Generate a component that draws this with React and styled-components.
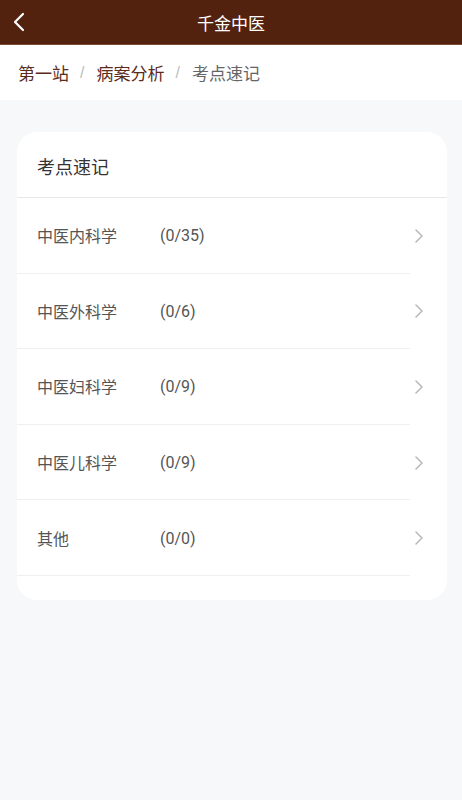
import React from "react";
import styled, { createGlobalStyle } from "styled-components";

const GlobalStyle = createGlobalStyle`
  html, body {
    margin: 0;
    padding: 0;
    background: #f7f8fa;
    font-family: Roboto, "Noto Sans CJK SC", "Noto Sans", sans-serif;
  }
`;

const Page = styled.div`
  min-height: 800px;
  background: #f7f8fa;
`;

const NavBar = styled.div`
  height: 44px;
  background: #52220f;
  border-bottom: 1px solid #7a4a33;
  display: flex;
  align-items: center;
`;

const BackButton = styled.div`
  width: 44px;
  height: 44px;
  display: flex;
  align-items: center;
  padding-left: 12px;
  box-sizing: border-box;
`;

const NavTitle = styled.div`
  flex: 1;
  text-align: center;
  margin-right: 44px;
  color: #fff;
  font-size: 17px;
  font-family: "Noto Sans CJK SC", sans-serif;
`;

const Crumbs = styled.div`
  height: 55px;
  background: #fff;
  display: flex;
  align-items: center;
  padding: 0 18px;
  font-size: 17px;
  font-family: "Noto Sans CJK SC", sans-serif;
`;

const Crumb = styled.span`
  color: ${(p) => (p.$current ? "#666" : "#5c2b1c")};
`;

const Slash = styled.span`
  color: #bdbdbd;
  margin: 0 12px 0 11px;
  font-size: 16px;
  font-family: "Liberation Sans", sans-serif;
`;

const Body = styled.div`
  padding: 32px 15px 0 17px;
`;

const Card = styled.div`
  background: #fff;
  border-radius: 20px;
  padding-bottom: 24px;
  overflow: hidden;
`;

const CardTitle = styled.div`
  height: 66px;
  display: flex;
  align-items: center;
  padding: 3px 0 0 20px;
  box-sizing: border-box;
  border-bottom: 1px solid #e8e8e8;
  color: #333;
  font-size: 18px;
  font-family: "Noto Sans CJK SC", sans-serif;
`;

const Row = styled.div`
  display: flex;
  align-items: center;
`;

const RowLine = styled.div`
  width: 393px;
  height: 75.6px;
  box-sizing: border-box;
  border-bottom: 1px solid #efefef;
  display: flex;
  align-items: center;
  padding-left: 20px;
  flex-shrink: 0;
`;

const Name = styled.span`
  width: 123px;
  color: #555;
  font-size: 16px;
  line-height: 24px;
  font-family: "Noto Sans CJK SC", sans-serif;
`;

const Count = styled.span`
  color: #555;
  font-size: 16px;
  line-height: 24px;
  padding-top: 2px;
  font-family: Roboto, sans-serif;
`;

const Arrow = styled.div`
  margin-left: 2px;
  display: flex;
  align-items: center;
`;

const chapters = [
  { name: "中医内科学", done: 0, total: 35 },
  { name: "中医外科学", done: 0, total: 6 },
  { name: "中医妇科学", done: 0, total: 9 },
  { name: "中医儿科学", done: 0, total: 9 },
  { name: "其他", done: 0, total: 0 },
];

const App = () => (
  <Page>
    <GlobalStyle />
    <NavBar>
      <BackButton>
        <svg width="14" height="20" viewBox="0 0 14 20">
          <path d="M11 2 L3 10 L11 18" fill="none" stroke="#fff" strokeWidth="2.2" strokeLinecap="round" strokeLinejoin="round" />
        </svg>
      </BackButton>
      <NavTitle>千金中医</NavTitle>
    </NavBar>
    <Crumbs>
      <Crumb>第一站</Crumb>
      <Slash>/</Slash>
      <Crumb>病案分析</Crumb>
      <Slash>/</Slash>
      <Crumb $current>考点速记</Crumb>
    </Crumbs>
    <Body>
      <Card>
        <CardTitle>考点速记</CardTitle>
        {chapters.map((c) => (
          <Row key={c.name}>
            <RowLine>
              <Name>{c.name}</Name>
              <Count>({c.done}/{c.total})</Count>
            </RowLine>
            <Arrow>
              <svg width="14" height="18" viewBox="0 0 14 18">
                <path d="M4 3 L10 9 L4 15" fill="none" stroke="#b8b8b8" strokeWidth="1.5" strokeLinecap="round" strokeLinejoin="round" />
              </svg>
            </Arrow>
          </Row>
        ))}
      </Card>
    </Body>
  </Page>
);

export default App;
